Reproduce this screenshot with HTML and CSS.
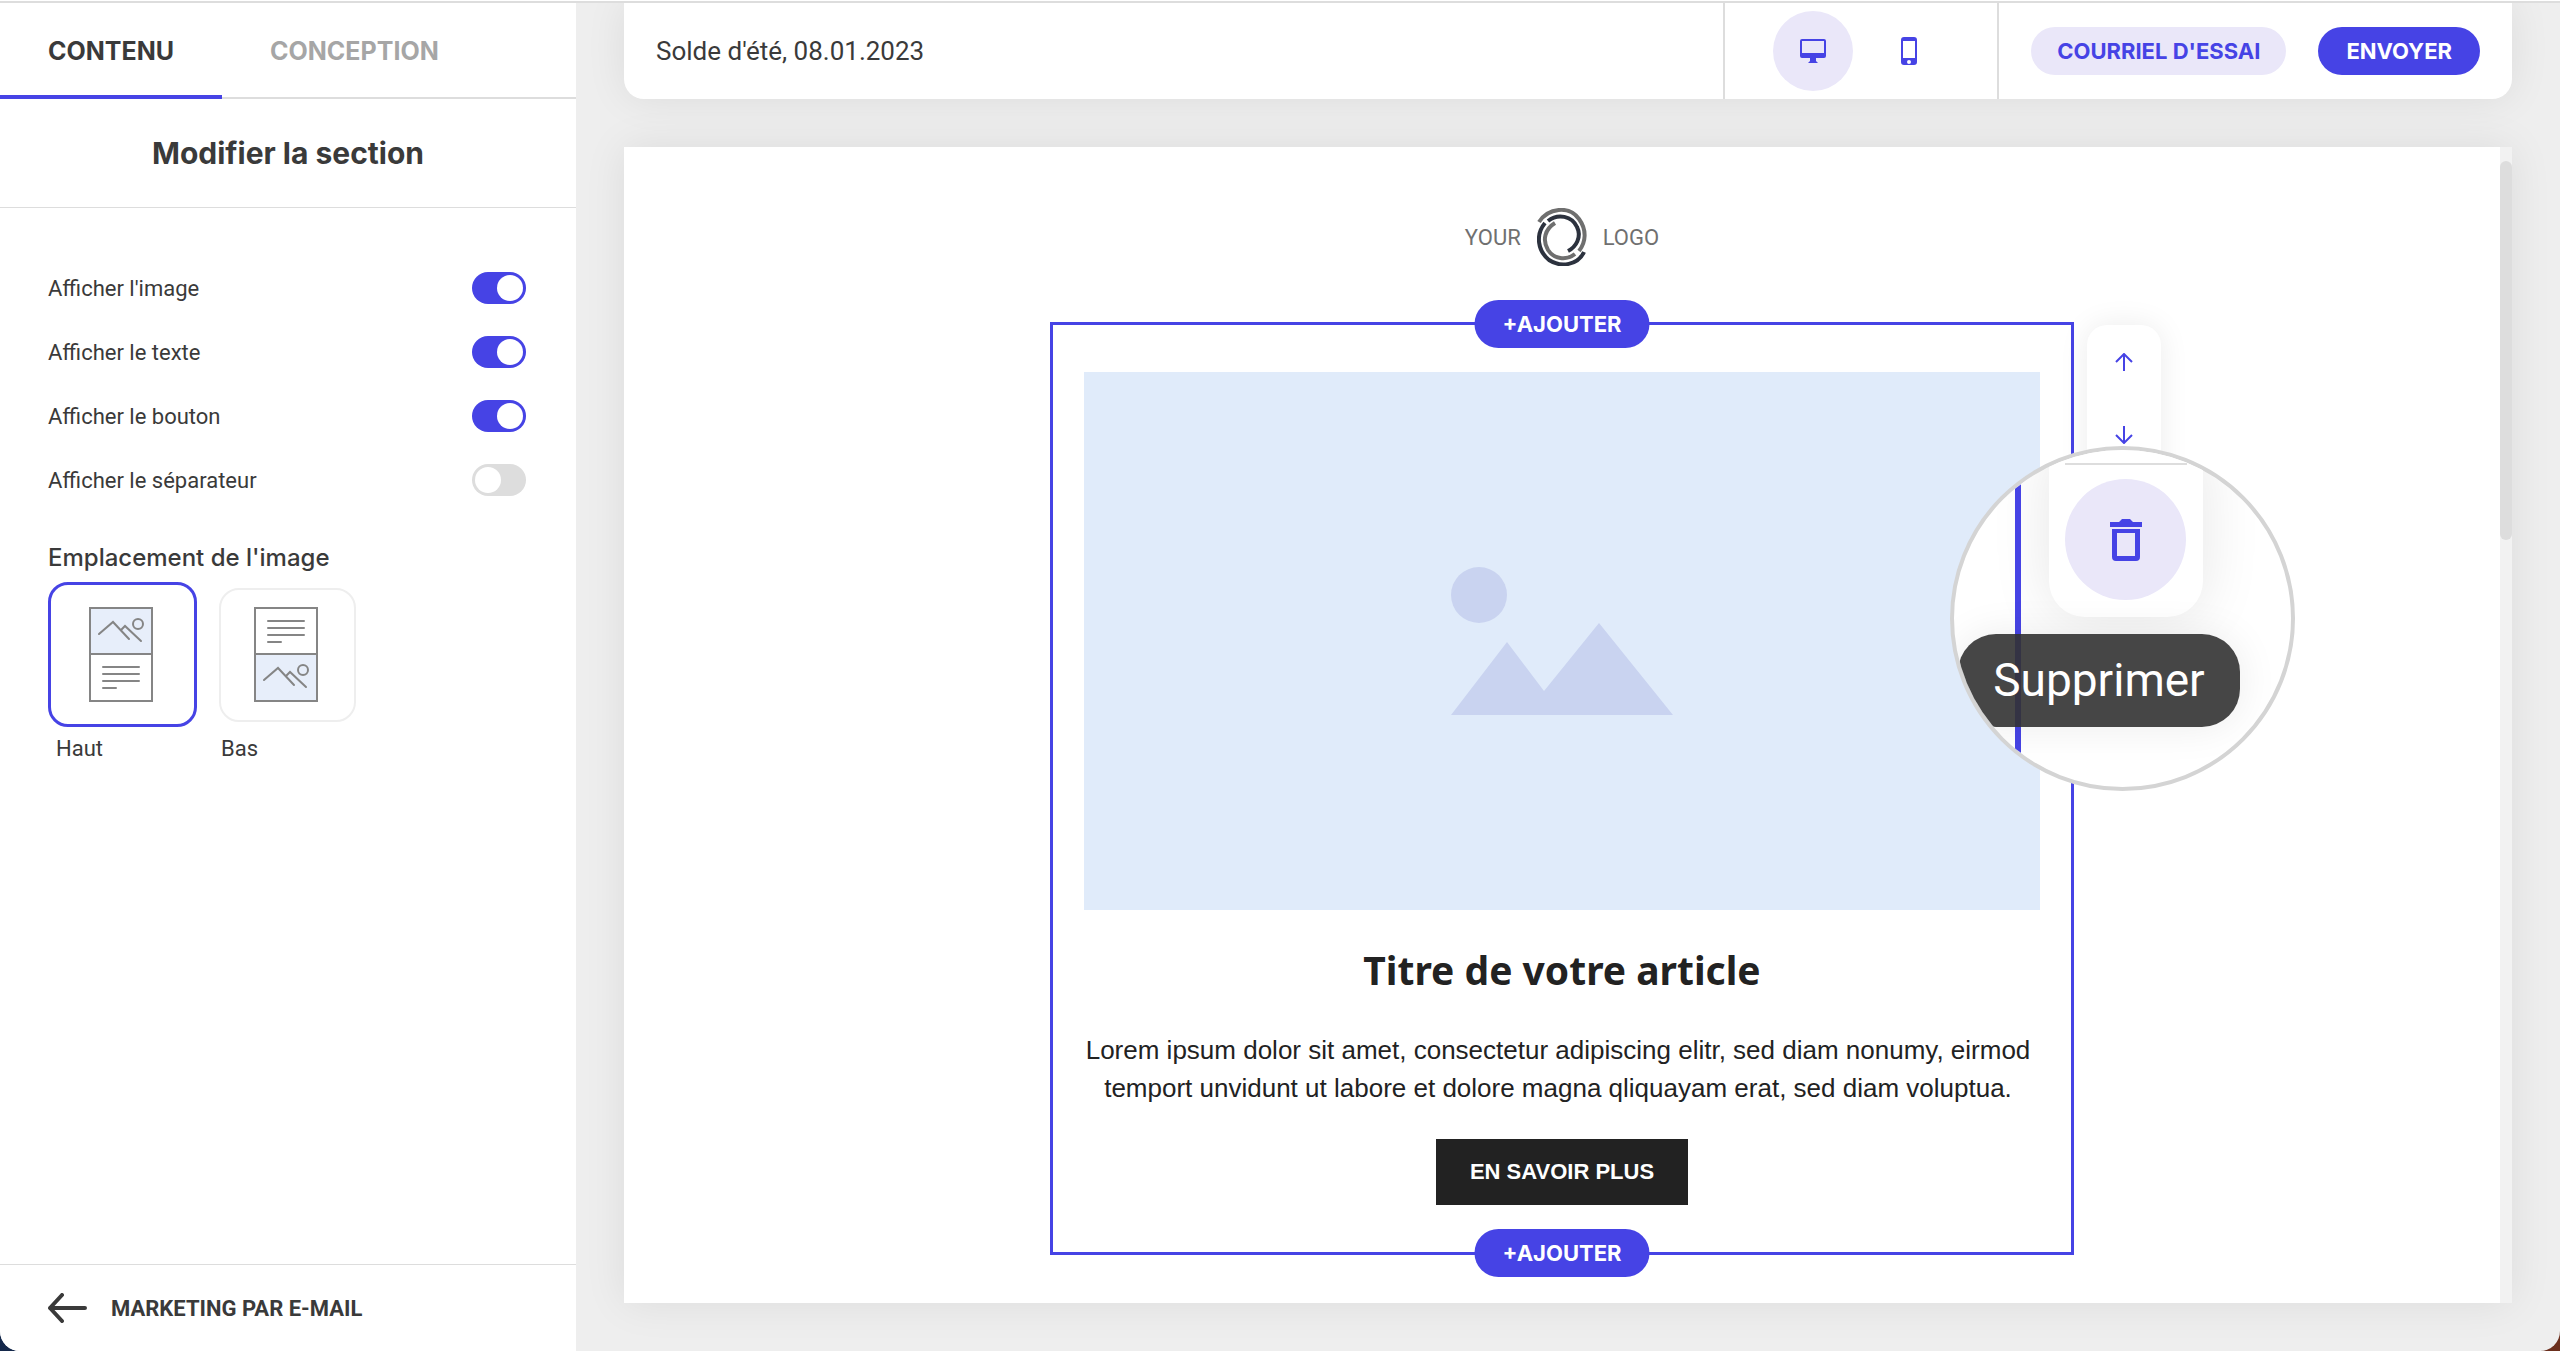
FILE: index.html
```html
<!DOCTYPE html>
<html lang="fr">
<head>
  <meta charset="UTF-8" />
  <meta name="viewport" content="width=device-width, initial-scale=1.0" />
  <title>Marketing par e-mail</title>
  <link rel="stylesheet" href="styles.css">
</head>
<body>

  <div class="app">
    <aside class="sidebar">
      <nav class="tabs">
        <button type="button" class="tab active">CONTENU</button>
        <button type="button" class="tab">CONCEPTION</button>
      </nav>
      <h2 class="sidebar-title">Modifier la section</h2>

      <form class="settings">
        <div class="setting">
          <label for="show-image">Afficher l'image</label>
          <input type="checkbox" class="switch" id="show-image" checked>
        </div>
        <div class="setting">
          <label for="show-text">Afficher le texte</label>
          <input type="checkbox" class="switch" id="show-text" checked>
        </div>
        <div class="setting">
          <label for="show-button">Afficher le bouton</label>
          <input type="checkbox" class="switch" id="show-button" checked>
        </div>
        <div class="setting">
          <label for="show-divider">Afficher le séparateur</label>
          <input type="checkbox" class="switch" id="show-divider">
        </div>

        <fieldset class="position">
          <legend>Emplacement de l'image</legend>
          <div class="options">
            <label class="option">
              <input type="radio" name="position" value="top" checked>
              <span class="option-slot">
                <span class="option-card">
                  <svg width="64" height="95" viewBox="0 0 64 95" fill="none" stroke="#858585" stroke-width="2">
                    <rect x="1" y="1" width="62" height="46" fill="#e7eefa"/>
                    <rect x="1" y="47" width="62" height="47"/>
                    <path d="M10 27 24 15 40 32M32 23 36 19 52 34" stroke-linecap="round"/>
                    <circle cx="49" cy="17" r="5"/>
                    <path d="M14 60H50M14 67H50M14 74H50M14 81H27" stroke-linecap="round"/>
                  </svg>
                </span>
              </span>
              <span class="option-label">Haut</span>
            </label>
            <label class="option">
              <input type="radio" name="position" value="bottom">
              <span class="option-slot">
                <span class="option-card">
                  <svg width="64" height="95" viewBox="0 0 64 95" fill="none" stroke="#858585" stroke-width="2">
                    <rect x="1" y="1" width="62" height="46"/>
                    <rect x="1" y="47" width="62" height="47" fill="#e7eefa"/>
                    <path d="M14 14H50M14 21H50M14 28H50M14 35H27" stroke-linecap="round"/>
                    <path d="M10 73 24 61 40 78M32 69 36 65 52 80" stroke-linecap="round"/>
                    <circle cx="49" cy="63" r="5"/>
                  </svg>
                </span>
              </span>
              <span class="option-label">Bas</span>
            </label>
          </div>
        </fieldset>
      </form>

      <a class="back-link" href="#">
        <svg width="40" height="30" viewBox="0 0 40 30" fill="none" stroke="#3a3a3a" stroke-width="4" stroke-linecap="round" stroke-linejoin="round">
          <path d="M14 2 2 15 14 28M2 15H37"/>
        </svg>
        MARKETING PAR E-MAIL
      </a>
    </aside>

    <main class="editor">
      <header class="topbar">
        <h1 class="mail-name">Solde d'été, 08.01.2023</h1>
        <div class="devices">
          <button type="button" class="device active" aria-label="Ordinateur">
            <svg width="28" height="24" viewBox="0 0 28 24" fill="#4643e5">
              <path fill-rule="evenodd" d="M3 0H25Q27 0 27 2V17Q27 19 25 19H17V22L19 24H9L11 22V19H3Q1 19 1 17V2Q1 0 3 0ZM3 2V14H25V2Z"/>
            </svg>
          </button>
          <button type="button" class="device" aria-label="Mobile">
            <svg width="16" height="28" viewBox="0 0 16 28" fill="#4643e5">
              <path fill-rule="evenodd" d="M3 0H13Q16 0 16 3V25Q16 28 13 28H3Q0 28 0 25V3Q0 0 3 0ZM2 4V21H14V4ZM8 23A2 2 0 1 0 8 27 2 2 0 1 0 8 23Z"/>
            </svg>
          </button>
        </div>
        <div class="actions">
          <button type="button" class="pill pill-light">COURRIEL D'ESSAI</button>
          <button type="button" class="pill">ENVOYER</button>
        </div>
      </header>

      <div class="canvas">
        <div class="mail">
          <div class="logo">
            <span>YOUR</span>
            <svg width="50" height="58" viewBox="0 0 50 58" fill="none" stroke-width="4">
              <path d="M2 14C11 0 32-3 42 11C50 22 49 34 42 43" stroke="#6f6f6f"/>
              <path d="M11 13C21 5 35 8 40 19C45 29 39 39 31 43" stroke="#2c323e"/>
              <path d="M8 15C-2 27 1 43 12 52C24 60 41 57 47 44" stroke="#2c323e"/>
              <path d="M18 15C8 21 5 32 11 42C17 51 29 53 38 46" stroke="#6f6f6f"/>
            </svg>
            <span>LOGO</span>
          </div>

          <section class="block">
            <button type="button" class="pill add add-top">+AJOUTER</button>
            <svg class="block-image" viewBox="0 0 956 538">
              <rect width="956" height="538" fill="#e0ebfa"/>
              <circle cx="395" cy="223" r="28" fill="#c9d3f0"/>
              <path d="M367 343 423 270 460 319 515 251 589 343Z" fill="#c9d3f0"/>
            </svg>
            <h3 class="block-title">Titre de votre article</h3>
            <p class="block-text">Lorem ipsum dolor sit amet, consectetur adipiscing elitr, sed diam nonumy, eirmod<br>temport unvidunt ut labore et dolore magna qliquayam erat, sed diam voluptua.</p>
            <a class="block-button" href="#">EN SAVOIR PLUS</a>
            <button type="button" class="pill add add-bottom">+AJOUTER</button>

            <div class="tools">
              <button type="button" class="tool" aria-label="Monter">
                <svg width="18" height="18" viewBox="0 0 18 18" fill="none" stroke="#4643e5" stroke-width="2">
                  <path d="M9 18V2M1 9 9 1 17 9"/>
                </svg>
              </button>
              <button type="button" class="tool" aria-label="Descendre">
                <svg width="18" height="18" viewBox="0 0 18 18" fill="none" stroke="#4643e5" stroke-width="2">
                  <path d="M9 0V16M1 9 9 17 17 9"/>
                </svg>
              </button>
            </div>

            <!-- Zoomed view of the delete tool -->
            <div class="lens">
              <div class="lens-tools">
                <button type="button" class="lens-delete" aria-label="Supprimer">
                  <svg width="34" height="42" viewBox="0 0 34 42" fill="#4643e5">
                    <path d="M1 3H10L13 0H21L24 3H33V8H1Z"/>
                    <path fill-rule="evenodd" d="M3 10H31V38Q31 42 27 42H7Q3 42 3 38ZM8 14V37H26V14Z"/>
                  </svg>
                </button>
              </div>
              <div class="lens-tooltip">Supprimer</div>
            </div>
          </section>
        </div>
        <div class="scrollbar"><div class="scrollbar-thumb"></div></div>
      </div>
    </main>
  </div>

</body>
</html>
```
FILE: styles.css
```css
/* Global Styles */
* {
  box-sizing: border-box;
  margin: 0;
  padding: 0;
}
body {
  background: linear-gradient(to right, #14284b, #6b2f1d);
  border-top: 1px solid #fff;
  color: #3a3a3a;
  font-family: Roboto, Arial, sans-serif;
  font-size: 22px;
}
button {
  border: none;
  background: none;
  cursor: pointer;
}
svg {
  display: block;
}

.app {
  display: flex;
  min-height: calc(100vh - 1px);
  background: #eee;
  border-top: 2px solid #ddd;
  border-radius: 0 0 20px 20px;
  overflow: hidden;
}

/* Sidebar */
.sidebar {
  display: flex;
  flex-direction: column;
  width: 576px;
  flex-shrink: 0;
  background: #fff;
}
.tabs {
  display: flex;
  height: 96px;
  border-bottom: 2px solid #ddd;
}
.tab {
  height: 96px;
  padding: 4px 48px 0;
  font-family: Inter, sans-serif;
  font-size: 25px;
  font-weight: 700;
  color: #a6a6a6;
  border-bottom: 4px solid transparent;
}
.tab.active {
  color: #3a3a3a;
  border-bottom-color: #4643e5;
}
.sidebar-title {
  padding: 36px 0;
  border-bottom: 1px solid #ddd;
  font-family: Inter, sans-serif;
  font-size: 30px;
  line-height: 36px;
  text-align: center;
}
.settings {
  flex: 1;
  padding: 64px 48px;
}
.setting {
  display: flex;
  justify-content: space-between;
  align-items: center;
  height: 32px;
  margin: 0 2px 32px 0;
}
.switch {
  appearance: none;
  display: flex;
  align-items: center;
  width: 54px;
  height: 32px;
  padding: 3px;
  border-radius: 16px;
  background: #ddd;
  cursor: pointer;
}
.switch::before {
  content: "";
  width: 26px;
  height: 26px;
  border-radius: 50%;
  background: #fff;
}
.switch:checked {
  justify-content: flex-end;
  background: #4643e5;
}

/* Image position picker */
.position {
  border: none;
  margin-top: 46px;
  padding-top: 8px;
}
.position legend {
  font-family: Inter, sans-serif;
  font-size: 24px;
  font-weight: 500;
  line-height: 32px;
}
.options {
  display: flex;
  gap: 16px;
}
.option {
  width: 149px;
  cursor: pointer;
}
.option input {
  position: absolute;
  opacity: 0;
}
.option-slot {
  display: flex;
  justify-content: center;
  align-items: center;
  height: 145px;
}
.option-card {
  display: flex;
  justify-content: center;
  align-items: center;
  width: 137px;
  height: 134px;
  padding-right: 4px;
  border: 2px solid #eee;
  border-radius: 20px;
}
.option input:checked + .option-slot .option-card {
  width: 149px;
  height: 145px;
  border: 3px solid #4643e5;
}
.option-label {
  display: block;
  margin-top: 8px;
  padding-left: 8px;
  line-height: 28px;
}
.back-link {
  display: flex;
  align-items: center;
  gap: 23px;
  height: 87px;
  padding: 0 48px;
  border-top: 1px solid #ddd;
  color: #3a3a3a;
  font-weight: 700;
  text-decoration: none;
}

/* Editor */
.editor {
  display: flex;
  flex-direction: column;
  gap: 48px;
  flex: 1;
  padding: 0 48px 48px;
}
.topbar {
  display: flex;
  height: 96px;
  background: #fff;
  border-radius: 0 0 20px 20px;
  box-shadow: 0 0 40px rgba(0, 0, 0, 0.08);
}
.mail-name {
  flex: 1;
  padding-left: 32px;
  font-size: 26px;
  font-weight: 400;
  line-height: 96px;
}
.devices,
.actions {
  display: flex;
  align-items: center;
  border-left: 2px solid #ddd;
}
.devices {
  gap: 16px;
  padding: 0 48px;
}
.actions {
  gap: 32px;
  padding: 0 32px;
}
.device {
  display: flex;
  justify-content: center;
  align-items: center;
  width: 80px;
  height: 80px;
  border-radius: 50%;
}
.device.active {
  background: #eae7f9;
}
.pill {
  height: 48px;
  padding: 0 28px;
  border-radius: 24px;
  background: #4643e5;
  color: #fff;
  font-family: Inter, sans-serif;
  font-size: 22px;
  font-weight: 700;
}
.pill-light {
  padding: 0 26px;
  background: #eae7f9;
  color: #4643e5;
}

.canvas {
  display: flex;
  flex: 1;
  background: #fff;
  box-shadow: 0 0 40px rgba(0, 0, 0, 0.08);
}
.mail {
  flex: 1;
  padding: 61px 0 46px;
}
.scrollbar {
  width: 12px;
  padding-top: 14px;
  background: #f2f2f2;
}
.scrollbar-thumb {
  height: 379px;
  border-radius: 6px;
  background: #ddd;
}
.logo {
  display: flex;
  justify-content: center;
  align-items: center;
  gap: 16px;
  margin-bottom: 56px;
  color: #707070;
}

/* Selected block */
.block {
  position: relative;
  max-width: 1024px;
  margin: 0 auto;
  padding: 47px 31px;
  border: 3px solid #4643e5;
  text-align: center;
  color: #222;
}
.block-image {
  width: 100%;
}
.block-title {
  margin-top: 36px;
  font-family: "Noto Sans", sans-serif;
  font-size: 39px;
  line-height: 48px;
}
.block-text {
  margin: 37px 0 32px;
  padding-right: 8px;
  font-family: "Liberation Sans", Arial, sans-serif;
  font-size: 26px;
  line-height: 38px;
}
.block-button {
  display: inline-block;
  padding: 0 34px;
  background: #222;
  color: #fff;
  font-family: "Liberation Sans", Arial, sans-serif;
  font-weight: 700;
  line-height: 66px;
  text-decoration: none;
  vertical-align: top;
}
.add {
  position: absolute;
  left: 50%;
  transform: translateX(-50%);
}
.add-top {
  top: -25px;
}
.add-bottom {
  bottom: -25px;
}
.tools {
  position: absolute;
  top: 0;
  left: calc(100% + 16px);
  width: 74px;
  height: 240px;
  border-radius: 20px;
  background: #fff;
  box-shadow: 0 0 30px rgba(0, 0, 0, 0.08);
}
.tool {
  display: flex;
  justify-content: center;
  align-items: center;
  width: 74px;
  height: 73px;
}

/* Magnifier */
.lens {
  position: absolute;
  top: 121px;
  left: calc(100% - 121px);
  width: 345px;
  height: 345px;
  border: 4px solid #d4d4d4;
  border-radius: 50%;
  background: #fff;
  overflow: hidden;
}
.lens::before {
  content: "";
  position: absolute;
  left: 61px;
  width: 6px;
  height: 100%;
  background: #4643e5;
}
.lens-tools {
  width: 154px;
  height: 167px;
  margin-left: 95px;
  padding: 13px 16px;
  border-radius: 0 0 36px 36px;
  background: #fff;
  box-shadow: 0 0 60px rgba(0, 0, 0, 0.1);
}
.lens-tools::before {
  content: "";
  display: block;
  height: 2px;
  background: #ddd;
}
.lens-delete {
  display: flex;
  justify-content: center;
  align-items: center;
  width: 121px;
  height: 121px;
  margin-top: 14px;
  border-radius: 50%;
  background: #eae7f9;
}
.lens-tooltip {
  position: relative;
  width: 282px;
  height: 93px;
  margin: 17px 0 0 4px;
  border-radius: 38px;
  background: rgba(50, 50, 50, 0.9);
  box-shadow: 0 0 40px rgba(0, 0, 0, 0.08);
  color: #fff;
  font-size: 46px;
  line-height: 93px;
}
```
